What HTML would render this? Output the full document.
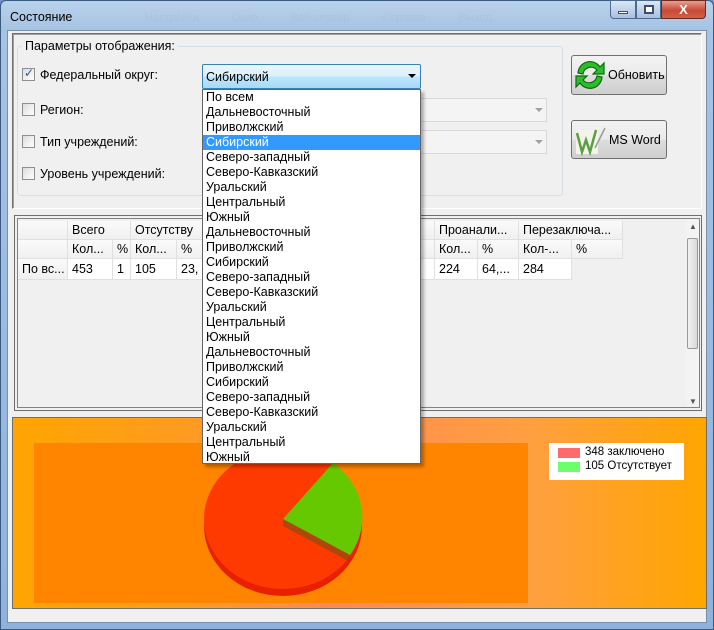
<!DOCTYPE html>
<html><head><meta charset="utf-8"><style>
*{margin:0;padding:0;box-sizing:border-box}
body{width:714px;height:630px;overflow:hidden;font-family:"Liberation Sans",sans-serif;font-size:12px;position:relative;background:#6d93c4}
.a{position:absolute}
.frame{left:0;top:0;width:714px;height:630px;background:linear-gradient(180deg,#b9d1ea 0,#a6c3e4 30px,#8fb2dc 100%);border:1px solid #3a5a80;border-radius:6px 6px 0 0}
.client{left:7px;top:30px;width:700px;height:593px;background:#f0f0f0;border:1px solid #7a8fa8}
.cb{width:13px;height:13px;border:1px solid #8f8f8f;background:linear-gradient(135deg,#dcdcdc,#fff)}
.lbl{font-size:12.5px;color:#000}
.combo{border:1px solid #d9d9d9;background:#f4f4f4;height:24px}
.btn{border:1px solid #707070;border-radius:3px;background:linear-gradient(#f2f2f2 0,#ebebeb 50%,#dddddd 51%,#cfcfcf 100%)}
.cell{position:absolute;height:19px;line-height:19px;padding-left:4px;font-size:12.5px;white-space:nowrap;overflow:hidden;border-right:1px solid #e0e0e0;border-bottom:1px solid #e0e0e0}
.hd{background:linear-gradient(#fafafa,#f0f0f0)}
.dd{left:202px;top:89px;width:219px;height:375px;background:#fff;border:1px solid #646464;box-shadow:3px 3px 3px rgba(0,0,0,.3)}
.dd div{height:15px;line-height:15px;padding-left:3px;font-size:12.5px}
.sel{background:#3399ff;color:#fff}
</style></head><body>
<div class="a frame"></div>
<div class="a" style="left:10px;top:10px;font-size:12.5px">Состояние</div>
<div class="a" style="left:145px;top:12px;font-size:11px;color:#9db8d8;opacity:.35;word-spacing:30px">Настройки Окно Веб-сервер Справка Выход</div>
<div class="a" style="left:610px;top:0;width:26px;height:19px;border:1px solid #4a6a90;border-radius:0 0 0 4px;background:linear-gradient(#dbe7f5,#a7c0de)"><div class="a" style="left:7px;top:10px;width:10px;height:3px;background:#fff;border:1px solid #3b4f6a"></div></div>
<div class="a" style="left:636px;top:0;width:25px;height:19px;border:1px solid #4a6a90;background:linear-gradient(#dbe7f5,#a7c0de)"><div class="a" style="left:7px;top:4px;width:10px;height:9px;border:2px solid #3b4f6a;background:#fff"></div></div>
<div class="a" style="left:661px;top:0;width:45px;height:19px;border:1px solid #6a2a20;border-radius:0 0 4px 0;background:linear-gradient(#e8a090,#c74a36 55%,#d06048);color:#fff;font-weight:bold;text-align:center;line-height:18px;font-size:13px">X</div>

<div class="a client"></div>
<div class="a" style="left:12px;top:33px;width:690px;height:176px;border:1px solid #6e6e6e;border-right-color:#fff;border-bottom-color:#fff;box-shadow:inset 1px 1px 0 #a0a0a0"></div>
<div class="a" style="left:17px;top:46px;width:546px;height:150px;border:1px solid #d5dfe5;border-radius:3px"></div>
<div class="a lbl" style="left:22px;top:39px;background:#f0f0f0;padding:0 3px">Параметры отображения:</div>

<div class="a cb" style="left:22px;top:68px"><span class="a" style="left:1px;top:-3px;font-size:12px;color:#3a4f8a">✓</span></div>
<div class="a lbl" style="left:40px;top:68px">Федеральный округ:</div>
<div class="a" style="left:202px;top:64px;width:219px;height:25px;border:1px solid #3c7fb1;border-radius:2px;background:linear-gradient(#eaf6fd,#d9f0fc 50%,#bee6fd 51%,#a7d9f5)"></div>
<div class="a lbl" style="left:206px;top:70px">Сибирский</div>
<div class="a" style="left:408px;top:74px;width:0;height:0;border-left:4px solid transparent;border-right:4px solid transparent;border-top:4px solid #000"></div>

<div class="a cb" style="left:22px;top:103px"></div>
<div class="a lbl" style="left:40px;top:103px">Регион:</div>
<div class="a combo" style="left:202px;top:98px;width:345px"></div>
<div class="a" style="left:535px;top:108px;border-left:4px solid transparent;border-right:4px solid transparent;border-top:4px solid #a0a0a0"></div>

<div class="a cb" style="left:22px;top:135px"></div>
<div class="a lbl" style="left:40px;top:135px">Тип учреждений:</div>
<div class="a combo" style="left:202px;top:130px;width:345px"></div>
<div class="a" style="left:535px;top:140px;border-left:4px solid transparent;border-right:4px solid transparent;border-top:4px solid #a0a0a0"></div>

<div class="a cb" style="left:22px;top:167px"></div>
<div class="a lbl" style="left:40px;top:167px">Уровень учреждений:</div>

<div class="a btn" style="left:571px;top:55px;width:96px;height:40px"></div>
<svg class="a" style="left:574px;top:59px" width="32" height="32" viewBox="0 0 32 32"><path d="M4 14 A12 12 0 0 1 26 8 L30 4 L30 15 L19 15 L23 11 A8 8 0 0 0 9 15 Z" fill="#2bbd2b" stroke="#0d6a0d" stroke-width="1.2"/><path d="M28 18 A12 12 0 0 1 6 24 L2 28 L2 17 L13 17 L9 21 A8 8 0 0 0 23 17 Z" fill="#2bbd2b" stroke="#0d6a0d" stroke-width="1.2"/></svg>
<div class="a lbl" style="left:608px;top:68px">Обновить</div>
<div class="a btn" style="left:571px;top:120px;width:96px;height:39px"></div>
<svg class="a" style="left:575px;top:124px" width="32" height="32" viewBox="0 0 32 32"><rect x="1" y="6" width="22" height="24" fill="#f4f4ec"/><path d="M2 9 L7 28 L11 16 L15 28 L21 6" fill="none" stroke="#5aa040" stroke-width="2.5"/><path d="M20 24 L30 4" stroke="#999" stroke-width="1.5"/></svg>
<div class="a lbl" style="left:609px;top:133px">MS Word</div>

<div class="a" style="left:14px;top:215px;width:688px;height:196px;border:1px solid #6e6e6e;background:#f0f0f0"></div>
<div class="a" style="left:17px;top:218px;width:683px;height:190px;border:1px solid #828282;background:#f0f0f0"></div>
<div class="a" style="left:686px;top:219px;width:13px;height:188px;background:#f3f3f3"></div>
<div class="a" style="left:687px;top:238px;width:11px;height:111px;border:1px solid #999;border-radius:2px;background:linear-gradient(90deg,#f2f2f2,#d9d9d9)"></div>
<div class="a" style="left:689px;top:222px;font-size:8px;color:#555">▲</div>
<div class="a" style="left:689px;top:397px;font-size:8px;color:#555">▼</div>

<div class="cell hd" style="left:18px;top:221px;width:50px"></div>
<div class="cell hd" style="left:68px;top:221px;width:63px">Всего</div>
<div class="cell hd" style="left:131px;top:221px;width:75px">Отсутству</div>
<div class="cell hd" style="left:18px;top:240px;width:50px"></div>
<div class="cell hd" style="left:68px;top:240px;width:45px">Кол...</div>
<div class="cell hd" style="left:113px;top:240px;width:18px">%</div>
<div class="cell hd" style="left:131px;top:240px;width:46px">Кол...</div>
<div class="cell hd" style="left:177px;top:240px;width:29px">%</div>
<div class="cell hd" style="left:18px;top:259px;width:50px;height:21px;line-height:21px">По вс...</div>
<div class="cell" style="left:68px;top:259px;width:45px;height:21px;line-height:21px;background:#fff">453</div>
<div class="cell" style="left:113px;top:259px;width:18px;height:21px;line-height:21px;background:#fff">1</div>
<div class="cell" style="left:131px;top:259px;width:46px;height:21px;line-height:21px;background:#fff">105</div>
<div class="cell" style="left:177px;top:259px;width:29px;height:21px;line-height:21px;background:#fff">23,</div>

<div class="cell hd" style="left:421px;top:221px;width:14px"></div>
<div class="cell hd" style="left:435px;top:221px;width:84px">Проанали...</div>
<div class="cell hd" style="left:519px;top:221px;width:104px">Перезаключа...</div>
<div class="cell hd" style="left:421px;top:240px;width:14px"></div>
<div class="cell hd" style="left:435px;top:240px;width:43px">Кол...</div>
<div class="cell hd" style="left:478px;top:240px;width:41px">%</div>
<div class="cell hd" style="left:519px;top:240px;width:53px">Кол-...</div>
<div class="cell hd" style="left:572px;top:240px;width:51px">%</div>
<div class="cell" style="left:421px;top:259px;width:14px;height:21px;background:#fff"></div>
<div class="cell" style="left:435px;top:259px;width:43px;height:21px;line-height:21px;background:#fff">224</div>
<div class="cell" style="left:478px;top:259px;width:41px;height:21px;line-height:21px;background:#fff">64,...</div>
<div class="cell" style="left:519px;top:259px;width:53px;height:21px;line-height:21px;background:#fff">284</div>

<div class="a" style="left:12px;top:417px;width:695px;height:192px;border:1px solid #6e6e6e;background:linear-gradient(90deg,#ffa500 0,#ff9b20 25%,#ff8a50 45%,#ffa040 75%,#ffa500 100%)"></div>
<div class="a" style="left:34px;top:443px;width:494px;height:160px;background:#ff8400"></div>
<svg class="a" style="left:195px;top:430px" width="180" height="180" viewBox="0 0 180 180">
<ellipse cx="88" cy="96" rx="79" ry="70" fill="#e82000"/>
<ellipse cx="88" cy="89" rx="79" ry="70" fill="#ff3a00"/>
<path d="M88 89 L138 33 A79 70 0 0 1 155 125 Z" fill="#66c800"/>
<path d="M88 89 L155 125 L155 132 L88 96 Z" fill="#7a5010" opacity=".6"/>
</svg>
<div class="a" style="left:549px;top:443px;width:135px;height:37px;background:#fff"></div>
<div class="a" style="left:558px;top:448px;width:22px;height:10px;background:#ff6b6b"></div>
<div class="a" style="left:558px;top:462px;width:22px;height:10px;background:#6bff6b"></div>
<div class="a" style="left:585px;top:446px;font-size:11.5px">348 заключено</div>
<div class="a" style="left:585px;top:460px;font-size:11.5px">105 Отсутствует</div>

<div class="a dd">
<div>По всем</div><div>Дальневосточный</div><div>Приволжский</div><div class="sel">Сибирский</div><div>Северо-западный</div><div>Северо-Кавказский</div><div>Уральский</div><div>Центральный</div><div>Южный</div>
<div>Дальневосточный</div><div>Приволжский</div><div>Сибирский</div><div>Северо-западный</div><div>Северо-Кавказский</div><div>Уральский</div><div>Центральный</div><div>Южный</div>
<div>Дальневосточный</div><div>Приволжский</div><div>Сибирский</div><div>Северо-западный</div><div>Северо-Кавказский</div><div>Уральский</div><div>Центральный</div><div>Южный</div>
</div>
</body></html>
